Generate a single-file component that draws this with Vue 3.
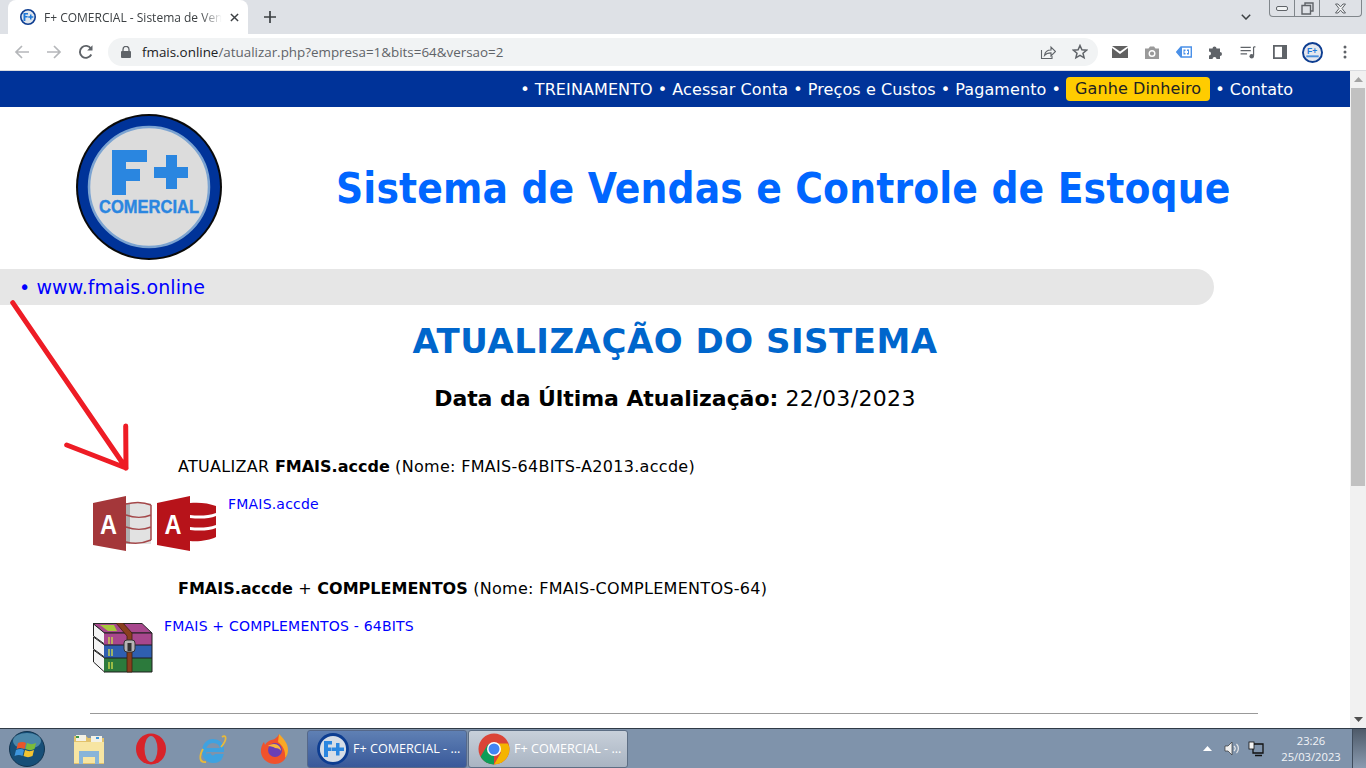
<script setup>
const navLinks = ['TREINAMENTO', 'Acessar Conta', 'Preços e Custos', 'Pagamento']
</script>

<template>
  <div class="screen">
    <!-- browser tabs -->
    <div class="tabstrip">
      <div class="tab">
        <svg class="favicon" viewBox="0 0 16 16">
          <circle cx="8" cy="8" r="7.2" fill="#dfe6ee" stroke="#0d3d91" stroke-width="1.6" />
          <path d="M3.500 4h4.500v1.600H5.400v1.500h2.200v1.500H5.400V12H3.500z" fill="#1e78d8" />
          <path d="M10 5.500h1.500v1.800h1.800v1.400h-1.800v1.800H10V8.700H8.300V7.300H10z" fill="#1e78d8" />
        </svg>
        <span class="tab-title">F+ COMERCIAL - Sistema de Ven</span>
        <svg class="tab-close" viewBox="0 0 10 10"><path d="M1 1l8 8M9 1l-8 8" stroke="#3c4043" stroke-width="1.6" /></svg>
      </div>
      <svg class="new-tab" viewBox="0 0 12 12"><path d="M6 0v12M0 6h12" stroke="#3c4043" stroke-width="1.7" /></svg>
      <div class="strip-right">
        <svg class="chevron" viewBox="0 0 10 6"><path d="M.8.8L5 5l4.2-4.2" fill="none" stroke="#3c4043" stroke-width="1.5" /></svg>
        <div class="caption">
          <div class="cap-btn cap-min"><span></span></div>
          <div class="cap-btn cap-max">
            <svg viewBox="0 0 13 13" width="13" height="13"><path d="M4 3V1h8v8h-2M1 3.500h8.500V12H1z" fill="none" stroke="#5f6368" stroke-width="1.400" /></svg>
          </div>
          <div class="cap-btn cap-close">
            <svg viewBox="0 0 13 11" width="13" height="11"><path d="M1.500 1h2.500L6.500 3.800 9 1h2.500L8 5.500l3.500 4.500H9L6.500 7.200 4 10H1.500L5 5.500z" fill="#f1f3f4" stroke="#5f6368" /></svg>
          </div>
        </div>
      </div>
    </div>

    <!-- address bar -->
    <div class="toolbar">
      <svg class="nav-ico" viewBox="0 0 16 16"><path d="M15 8H2M8 2L2 8l6 6" fill="none" stroke="#b5b7ba" stroke-width="1.700" /></svg>
      <svg class="nav-ico" viewBox="0 0 16 16"><path d="M1 8h13M8 2l6 6-6 6" fill="none" stroke="#b5b7ba" stroke-width="1.700" /></svg>
      <svg class="nav-ico" viewBox="0 0 16 16"><path d="M13.300 10.500A6 6 0 1 1 13 4.700" fill="none" stroke="#5f6368" stroke-width="1.900" /><path d="M14.500 1.200v5.300H9.200z" fill="#5f6368" /></svg>
      <div class="omnibox">
        <svg class="lock" viewBox="0 0 10 12"><path d="M2 5V3.400a3 3 0 0 1 6 0V5" fill="none" stroke="#5f6368" stroke-width="1.300" /><rect y="5" width="10" height="7" rx="1" fill="#5f6368" /></svg>
        <span class="url"><b>fmais.online</b>/atualizar.php?empresa=1&amp;bits=64&amp;versao=2</span>
        <svg class="omni-ico share" viewBox="0 0 16 16"><path d="M1.500 6v8.500H12V12" fill="none" stroke="#5f6368" stroke-width="1.100" /><path d="M4.500 11.500c.5-3.500 3-5.500 6.500-5.500V3l4.500 4.500L11 12V8.900c-2.500 0-5 .8-6.500 2.600z" fill="none" stroke="#5f6368" stroke-width="1.100" /></svg>
        <svg class="omni-ico star" viewBox="0 0 16 16"><path d="M8 1.500l1.900 4.300 4.600.4-3.500 3 1.100 4.600L8 11.400l-4.100 2.400L5 9.200l-3.500-3 4.600-.4z" fill="none" stroke="#5f6368" stroke-width="1.500" /></svg>
      </div>
      <div class="extensions">
        <svg viewBox="0 0 16 12" width="16" height="12"><path d="M0 0h16L8 5.500z" fill="#616161" /><path d="M0 2l8 6 8-6v10H0z" fill="#616161" /></svg>
        <svg viewBox="0 0 14 13" width="14" height="13"><path d="M0 2.500h3.500L5 .5h4l1.500 2H14V13H0z" fill="#9a9a9a" /><circle cx="7" cy="7.500" r="2.800" fill="none" stroke="#fff" stroke-width="1.400" /></svg>
        <svg viewBox="0 0 16 12" width="16" height="12"><path d="M5 1h10.300v10H5L.8 6z" fill="#fff" stroke="#4a90e8" stroke-width="1.400" /><path d="M5 1L.8 6 5 11h1V1z" fill="#4a90e8" /><path d="M7.500 3.500h2v1.500h-1v2h1v1.500h-2zM13 3.500h-2V5h1v2h-1v1.500h2z" fill="#4a90e8" /></svg>
        <svg viewBox="0 0 14 14" width="14" height="14"><path d="M0 3.500h3.500a2 2 0 0 1 4 0H11V7a2 2 0 0 1 0 4v3H7.500a2 2 0 0 0-4 0H0v-3.500a2 2 0 0 0 0-4z" fill="#5f6368" /></svg>
        <svg viewBox="0 0 16 14" width="16" height="13"><path d="M0 1.500h11M0 5h11M0 8.500h7" stroke="#5f6368" stroke-width="1.300" /><path d="M14 1v9.500M14 1h2" stroke="#5f6368" stroke-width="1.300" /><circle cx="12" cy="11" r="2.400" fill="#5f6368" /></svg>
        <svg viewBox="0 0 14 14" width="14" height="14"><path fill-rule="evenodd" d="M0 0h14v14H0zM1.800 1.800v10.400H9V1.800z" fill="#5f6368" /></svg>
        <svg class="avatar" viewBox="0 0 22 22" width="21" height="21">
          <circle cx="11" cy="11" r="10" fill="#e4e8ee" stroke="#0d3d91" stroke-width="2" />
          <text x="10.500" y="12.500" class="avatar-text">F+</text>
          <rect x="4.500" y="14" width="13" height="2" fill="#4a8fdc" />
        </svg>
        <svg class="kebab" viewBox="0 0 4 14" width="4" height="14"><circle cx="2" cy="2" r="1.500" fill="#5f6368" /><circle cx="2" cy="7" r="1.500" fill="#5f6368" /><circle cx="2" cy="12" r="1.500" fill="#5f6368" /></svg>
      </div>
    </div>

    <div class="viewport">
      <div class="page">
        <nav class="topnav">
          <template v-for="link in navLinks" :key="link">
            <span class="dot">•</span><a>{{ link }}</a>
          </template>
          <span class="dot">•</span>
          <a class="highlight">Ganhe Dinheiro</a>
          <span class="dot">•</span><a class="last-link">Contato</a>
        </nav>

        <header class="brand">
          <svg class="logo" viewBox="0 0 146 146">
            <circle cx="73" cy="73" r="73" fill="#0a0a0a" />
            <circle cx="73" cy="73" r="71" fill="#003399" />
            <circle cx="73" cy="73" r="60" fill="#dcdcdc" stroke="#7ba3d1" stroke-width="2.500" />
            <path d="M36 36h35v12H50v7h14v12H50v14H36z" fill="#2a86e0" />
            <path d="M90 41h11v12h11v11H101v11H90V64H78V53h12z" fill="#2a86e0" />
            <text x="73" y="99" textLength="100" lengthAdjust="spacingAndGlyphs" class="logo-text">COMERCIAL</text>
          </svg>
          <h1>Sistema de Vendas e Controle de Estoque</h1>
        </header>

        <div class="site-bar"><span>•</span> www.fmais.online</div>

        <h2>ATUALIZAÇÃO DO SISTEMA</h2>
        <p class="last-update"><b>Data da Última Atualização:</b> 22/03/2023</p>

        <section class="downloads">
          <p class="dl-title">ATUALIZAR <b>FMAIS.accde</b> (Nome: FMAIS-64BITS-A2013.accde)</p>
          <div class="dl-row dl-access">
            <svg class="access-icons" viewBox="0 0 124 56">
              <path d="M0 7L33 0v55L0 49z" fill="#a4373a" />
              <text x="15.500" y="38" textLength="17" lengthAdjust="spacingAndGlyphs" class="access-a">A</text>
              <rect x="33" y="7" width="25" height="41" fill="#e2e2e2" />
              <rect x="33" y="7" width="4" height="41" fill="#b0b0b0" />
              <path d="M33 8c8-2 18-2 25 1M33 19c8 3 18 3 25 0M33 31c8 3 18 3 25 0M33 46c8 2 18 1 25-2M58 9v35" fill="none" stroke="#a4484a" stroke-width="1.500" />
              <path d="M64 7L97 0v55L64 49z" fill="#b7131a" />
              <text x="80" y="38" textLength="17" lengthAdjust="spacingAndGlyphs" class="access-a">A</text>
              <path d="M97 7c8-1 19 0 26 3v7c-8 3-18 3-26 2zM97 22c9 1 19 1 26-2v9c-8 3-18 3-26 2zM97 34c9 1 19 1 26-2v9c-6 3-17 5-26 4z" fill="#b7131a" />
            </svg>
            <a class="dl-link">FMAIS.accde</a>
          </div>

          <p class="dl-title second"><b>FMAIS.accde</b> + <b>COMPLEMENTOS</b> (Nome: FMAIS-COMPLEMENTOS-64)</p>
          <div class="dl-row dl-rar">
            <svg class="rar-icon" viewBox="0 0 60 50">
              <path d="M0 .5h49l10 9.500H11z" fill="#a8478d" stroke="#2a2a2a" />
              <path d="M7 2l14 0 3 6H15z" fill="#a8c83c" />
              <path d="M.5 1l11 9v11L.5 13zM.5 14l11 8v12L.5 26zM.5 27l11 8v14L.5 39z" fill="#f4f4f4" stroke="#1f1f1f" />
              <rect x="11" y="10" width="48" height="12" fill="#a8478d" />
              <rect x="11" y="22" width="48" height="13" fill="#2f5fb0" />
              <rect x="11" y="35" width="48" height="14" fill="#2c7a3c" />
              <path d="M11 10h48M11 22h48M11 35h48M11 49h48M59 10v39" stroke="#1f1f1f" fill="none" />
              <path d="M16 14v7M19 14v7M16 26v7M19 26v7M16 39v7M19 39v7" stroke="#c9d84a" stroke-width="1.400" />
              <path d="M23 0h7l9 10v39h-5V13z" fill="#8a3f1f" stroke="#40200f" stroke-width=".800" />
              <rect x="31" y="17" width="11" height="12" rx="3" fill="#b5b5b5" stroke="#333" />
              <rect x="34.500" y="20" width="4" height="8" fill="#333" />
            </svg>
            <a class="dl-link">FMAIS + COMPLEMENTOS - 64BITS</a>
          </div>
        </section>

        <hr />
      </div>

      <div class="scrollbar">
        <svg class="sb-arrow" viewBox="0 0 9 5"><path d="M4.500 0L9 5H0z" fill="#a3a3a3" /></svg>
        <div class="sb-track"><div class="sb-thumb"></div></div>
        <svg class="sb-arrow" viewBox="0 0 9 5"><path d="M0 0h9L4.500 5z" fill="#505050" /></svg>
      </div>

      <!-- red arrow pasted over the page -->
      <svg class="red-arrow" viewBox="0 0 130 175">
        <path d="M3.700 2.700L117 168M117 168L116.700 126M117 168L57.700 145" fill="none" stroke="#ee1c25" stroke-width="5" stroke-linecap="round" />
      </svg>
    </div>

    <!-- windows taskbar -->
    <footer class="taskbar">
      <div class="start">
        <svg viewBox="0 0 36 36" width="36" height="36">
          <circle cx="18" cy="18" r="17.500" fill="#174f78" stroke="#12344f" />
          <ellipse cx="18" cy="10" rx="14" ry="8" fill="#78b6d2" opacity=".55" />
          <path d="M9 12c3-1.500 6-1.500 8 0l-1.500 6c-2.500-1.500-5-1.500-8 0z" fill="#e8552a" />
          <path d="M18 12c3 1.500 6 1.500 9 0l-1.500 6c-3 1.500-6 1.500-9 0z" fill="#7bbb3a" />
          <path d="M7 19c3-1.500 6-1.500 8 0l-1.500 6c-2.500-1.500-5-1.500-8 0z" fill="#3f96dc" />
          <path d="M16 19c3 1.500 6 1.500 9 0l-1.500 6c-3 1.500-6 1.500-9 0z" fill="#f4c431" />
        </svg>
      </div>
      <div class="pinned">
        <svg viewBox="0 0 32 32" width="32" height="32">
          <path d="M1 3h12l2 2h16v26H1z" fill="#e2c26c" />
          <rect x="3" y="2" width="10" height="6" fill="#f3f1e5" />
          <rect x="3" y="3" width="3" height="2" fill="#3c9a4a" />
          <rect x="18" y="3" width="11" height="6" fill="#f3f1e5" />
          <rect x="23" y="4" width="3" height="2" fill="#3f96dc" />
          <rect x="1" y="9" width="30" height="21" fill="#f7e5a2" />
          <path d="M6 31V18h20v13h-4v-7H10v7z" fill="#88b4d8" />
        </svg>
        <svg viewBox="0 0 32 32" width="32" height="32">
          <ellipse cx="16" cy="16" rx="15" ry="15.500" fill="#d8232a" />
          <ellipse cx="16" cy="16" rx="6.500" ry="13" fill="#7f93ab" />
        </svg>
        <svg viewBox="0 0 32 32" width="32" height="32">
          <path d="M8 17h17c0-6-4-9-9-9s-9 4-9 10 4 10 9 10c4 0 7-2 8-5h-5c-1 1-2 1.500-3 1.500-3 0-4-2-4-4" fill="none" stroke="#3fa2e0" stroke-width="4" />
          <path d="M25 4c4-3 6 2-1 10M6 16C2 23 2 30 9 29" fill="none" stroke="#e8b93a" stroke-width="1.800" />
        </svg>
        <svg viewBox="0 0 32 32" width="32" height="32">
          <path d="M16 31C7 31 1 24 2 16c.5-3 2-6 3-7l1 3c1-2 3-4 6-5 1 0 6-1 8-6 1 3 1 5 1 7 4 2 7 6 7 11 0 8-6 12-12 12z" fill="#f0522c" />
          <path d="M20 1c4 4 9 9 9 16 0 3-1 6-3 8 1-8-3-13-7-16z" fill="#f9a825" />
          <circle cx="16" cy="17" r="7" fill="#6a3fb5" />
          <path d="M9 13c3 0 6 1 7 2 3 0 5 1 6 3 0-4-3-7-7-7-3 0-5 1-6 2z" fill="#f6b73c" />
        </svg>
      </div>
      <div class="task-btn active">
        <svg viewBox="0 0 32 32" width="32" height="32">
          <circle cx="16" cy="16" r="14.500" fill="#d6dde6" stroke="#0d3d91" stroke-width="2.800" />
          <path d="M7 8h8v3.500h-4v3h3.500V18H11v6H7z" fill="#2a86e0" />
          <path d="M19 10h3.500v4.500H27V18h-4.500v4.500H19V18h-4v-3.500h4z" fill="#2a86e0" />
        </svg>
        <span>F+ COMERCIAL - ...</span>
      </div>
      <div class="task-btn">
        <svg viewBox="0 0 32 32" width="32" height="32">
          <circle cx="16" cy="16" r="15.500" fill="#db4437" />
          <path d="M16 31.500A15.500 15.500 0 0 1 2.600 23.700L10 11l6 9z" fill="#0f9d58" />
          <path d="M31.500 16A15.500 15.500 0 0 1 16 31.500l7-12-7-9h13.600c1.200 1.700 1.900 3.500 1.900 5.500z" fill="#f4b400" />
          <circle cx="16" cy="16" r="7" fill="#fff" />
          <circle cx="16" cy="16" r="5.500" fill="#4285f4" />
        </svg>
        <span>F+ COMERCIAL - ...</span>
      </div>
      <div class="tray">
        <svg class="tray-up" viewBox="0 0 9 5" width="9" height="5"><path d="M4.500 0L9 5H0z" fill="#fff" /></svg>
        <svg class="tray-sound" viewBox="0 0 16 15" width="16" height="15"><path d="M1 5h3l4-4v13l-4-4H1z" fill="#f0f0f0" stroke="#333" stroke-width=".700" /><path d="M10 5c1.500 1.500 1.500 3.500 0 5M12.500 3c2.500 2.500 2.500 6.500 0 9" fill="none" stroke="#e8e8e8" stroke-width="1.200" /></svg>
        <svg class="tray-net" viewBox="0 0 16 16" width="16" height="16"><path d="M5 3h10v9H5z" fill="#7f93ab" stroke="#111" stroke-width="1.300" /><path d="M7 14.500h7" stroke="#111" stroke-width="1.500" /><rect x="1" y="1" width="5" height="7" fill="#f4f4f4" stroke="#111" stroke-width=".800" /></svg>
        <div class="clock">
          <span>23:26</span>
          <span>25/03/2023</span>
        </div>
      </div>
      <div class="show-desktop"></div>
    </footer>
  </div>
</template>

<style>
html, body {
  margin: 0;
  overflow: hidden;
}
</style>

<style scoped>
.screen {
  width: 1366px;
  height: 768px;
  display: flex;
  flex-direction: column;
  overflow: hidden;
  background: #fff;
  font-family: "DejaVu Sans", sans-serif;
}

/* tab strip */
.tabstrip {
  height: 34px;
  flex: none;
  background: #dee1e6;
  display: flex;
  align-items: flex-end;
  padding-left: 8px;
}
.tab {
  width: 240px;
  height: 34px;
  box-sizing: border-box;
  background: #fff;
  border-radius: 8px 8px 0 0;
  display: flex;
  align-items: center;
  padding: 0 12px;
  gap: 8px;
}
.favicon {
  width: 16px;
  height: 16px;
  flex: none;
}
.tab-title {
  flex: 1;
  white-space: nowrap;
  font: 12px "Open Sans", sans-serif;
  color: #3c4043;
  -webkit-mask-image: linear-gradient(90deg, #000 88%, transparent);
  mask-image: linear-gradient(90deg, #000 88%, transparent);
}
.tab-close {
  width: 9px;
  height: 9px;
  flex: none;
}
.new-tab {
  width: 12px;
  height: 12px;
  margin: 0 0 11px 16px;
}
.strip-right {
  margin-left: auto;
  align-self: flex-start;
  display: flex;
  align-items: flex-start;
  padding-right: 4px;
}
.chevron {
  width: 10px;
  height: 6px;
  margin: 14px 18px 0 0;
}
.caption {
  display: flex;
  height: 16px;
  border: 1px solid #80868b;
  border-top: 0;
  border-radius: 0 0 4px 4px;
}
.cap-btn {
  display: flex;
  align-items: center;
  justify-content: center;
  height: 16px;
}
.cap-min {
  width: 24px;
  border-right: 1px solid #80868b;
}
.cap-min span {
  width: 10px;
  height: 3px;
  border: 1px solid #5f6368;
  border-radius: 2px;
  background: #f1f3f4;
}
.cap-max {
  width: 24px;
  border-right: 1px solid #80868b;
}
.cap-close {
  width: 41px;
}

/* toolbar */
.toolbar {
  height: 37px;
  flex: none;
  box-sizing: border-box;
  background: #fff;
  border-bottom: 1px solid #dadce0;
  display: flex;
  align-items: center;
  padding-left: 14px;
}
.nav-ico {
  width: 16px;
  height: 16px;
  margin-right: 16px;
}
.omnibox {
  width: 990px;
  height: 28px;
  margin-left: -2px;
  border-radius: 14px;
  background: #f1f3f4;
  display: flex;
  align-items: center;
  padding: 0 10px 0 13px;
  box-sizing: border-box;
}
.lock {
  width: 10px;
  height: 12px;
  margin-right: 11px;
  flex: none;
}
.url {
  font: 13.400px "Open Sans", sans-serif;
  color: #5f6368;
  flex: 1;
  white-space: nowrap;
}
.url b {
  font-weight: 400;
  color: #202124;
}
.omni-ico {
  width: 16px;
  height: 16px;
  flex: none;
}
.share {
  margin-right: 16px;
}
.extensions {
  display: flex;
  align-items: center;
  gap: 17px;
  margin-left: 14px;
}
.avatar {
  margin-left: -2px;
}
.kebab {
  margin-left: 3px;
}
.avatar-text {
  font: bold 9px "Liberation Sans", sans-serif;
  fill: #1e78d8;
  text-anchor: middle;
}

/* page */
.viewport {
  position: relative;
  flex: 1;
  display: flex;
  min-height: 0;
}
.page {
  width: 1350px;
  flex: none;
  overflow: hidden;
}
.topnav {
  height: 36px;
  box-sizing: border-box;
  background: #003399;
  display: flex;
  align-items: center;
  justify-content: flex-end;
  padding-right: 57px;
  font-size: 16px;
  letter-spacing: .1px;
  color: #fff;
  white-space: nowrap;
}
.last-link {
  letter-spacing: 0;
}
.dot {
  margin: 0 5px;
}
.highlight {
  background: #ffcc00;
  color: #222;
  border-radius: 4px;
  padding: 2px 9px 3px;
}
.brand {
  height: 162px;
  display: flex;
  align-items: flex-start;
  padding-left: 76px;
}
.logo {
  width: 146px;
  height: 146px;
  flex: none;
  margin-top: 7px;
}
.logo-text {
  font: bold 18px "Liberation Sans", sans-serif;
  fill: #2a86e0;
  stroke: #2a86e0;
  stroke-width: .4px;
  text-anchor: middle;
}
h1 {
  margin: 54px 0 0 114px;
  font-family: "DejaVu Sans Condensed", "DejaVu Sans", sans-serif;
  font-size: 42px;
  line-height: 56px;
  font-weight: 700;
  letter-spacing: .13px;
  color: #0066ff;
  white-space: nowrap;
}
.site-bar {
  width: 1214px;
  height: 36px;
  box-sizing: border-box;
  background: #e6e6e6;
  border-radius: 0 18px 18px 0;
  padding-left: 19px;
  font-size: 19px;
  line-height: 36px;
  letter-spacing: .1px;
  color: #0000ff;
}
h2 {
  margin: 16px 0 0;
  text-align: center;
  font-size: 34px;
  line-height: 40px;
  font-weight: 700;
  letter-spacing: .5px;
  color: #0066cc;
}
.last-update {
  margin: 24px 0 0;
  text-align: center;
  font-size: 22px;
  line-height: 28px;
  letter-spacing: .35px;
  color: #000;
}
.last-update b {
  letter-spacing: -.07px;
}
.downloads {
  box-sizing: border-box;
  height: 300px;
  padding: 44px 0 0 90px;
}
.dl-title {
  margin: 0 0 0 88px;
  font-size: 16px;
  line-height: 20px;
  letter-spacing: .3px;
  color: #000;
}
.dl-title b {
  letter-spacing: 0;
}
.dl-title.second {
  margin-top: 27px;
}
.dl-row {
  display: flex;
  align-items: flex-start;
}
.dl-access {
  margin-top: 18px;
}
.dl-rar {
  margin-top: 18px;
}
.access-icons {
  width: 124px;
  height: 56px;
  flex: none;
  margin: 1px 0 0 3px;
}
.access-a {
  font: bold 28px "Liberation Sans", sans-serif;
  fill: #fff;
  text-anchor: middle;
}
.rar-icon {
  width: 60px;
  height: 50px;
  flex: none;
  margin: 6px 0 0 3px;
}
.dl-link {
  font-size: 14px;
  line-height: 18px;
  letter-spacing: .2px;
  color: #0000ff;
  margin-left: 11px;
}
hr {
  margin: 0 92px 0 90px;
  border: 0;
  border-top: 1px solid #999;
  height: 1px;
}
.scrollbar {
  width: 16px;
  flex: none;
  background: #f1f1f1;
  display: flex;
  flex-direction: column;
  align-items: center;
}
.sb-arrow {
  width: 9px;
  height: 5px;
  margin: 6px 0;
  flex: none;
}
.sb-track {
  flex: 1;
  width: 100%;
  box-sizing: border-box;
  padding: 0 1px;
}
.sb-thumb {
  height: 398px;
  background: #c1c1c1;
}
.red-arrow {
  position: absolute;
  left: 9px;
  top: 229px;
  width: 130px;
  height: 175px;
  pointer-events: none;
}

/* taskbar */
.taskbar {
  height: 40px;
  flex: none;
  box-sizing: border-box;
  background: #7f93ab;
  border-top: 1px solid #2f3a47;
  display: flex;
  align-items: center;
  color: #fff;
  font: 12.600px "Open Sans", sans-serif;
}
.start {
  width: 54px;
  display: flex;
  justify-content: center;
}
.pinned {
  display: flex;
  width: 253px;
  gap: 30px;
  padding-left: 19px;
  box-sizing: border-box;
}
.task-btn {
  width: 160px;
  height: 38px;
  box-sizing: border-box;
  display: flex;
  align-items: center;
  gap: 4px;
  padding-left: 9px;
  border: 1px solid #5d6e84;
  border-radius: 3px;
  margin-right: 1px;
  background: linear-gradient(#c8d0da, #a9b4c2);
  white-space: nowrap;
}
.task-btn.active {
  background: linear-gradient(#5f80b4, #39599a);
  border-color: #55688a;
}
.tray {
  margin-left: auto;
  display: flex;
  align-items: center;
  padding-right: 11px;
}
.tray-sound {
  margin-left: 12px;
}
.tray-net {
  margin-left: 8px;
}
.clock {
  width: 60px;
  display: flex;
  flex-direction: column;
  align-items: center;
  line-height: 16px;
  font-size: 11.200px;
  margin-left: 17px;
  color: #f2f4f7;
}
.show-desktop {
  width: 14px;
  height: 39px;
  box-sizing: border-box;
  border-left: 1px solid #3f4c5c;
  background: linear-gradient(#4e5a69, #8a9bb0);
}
</style>
